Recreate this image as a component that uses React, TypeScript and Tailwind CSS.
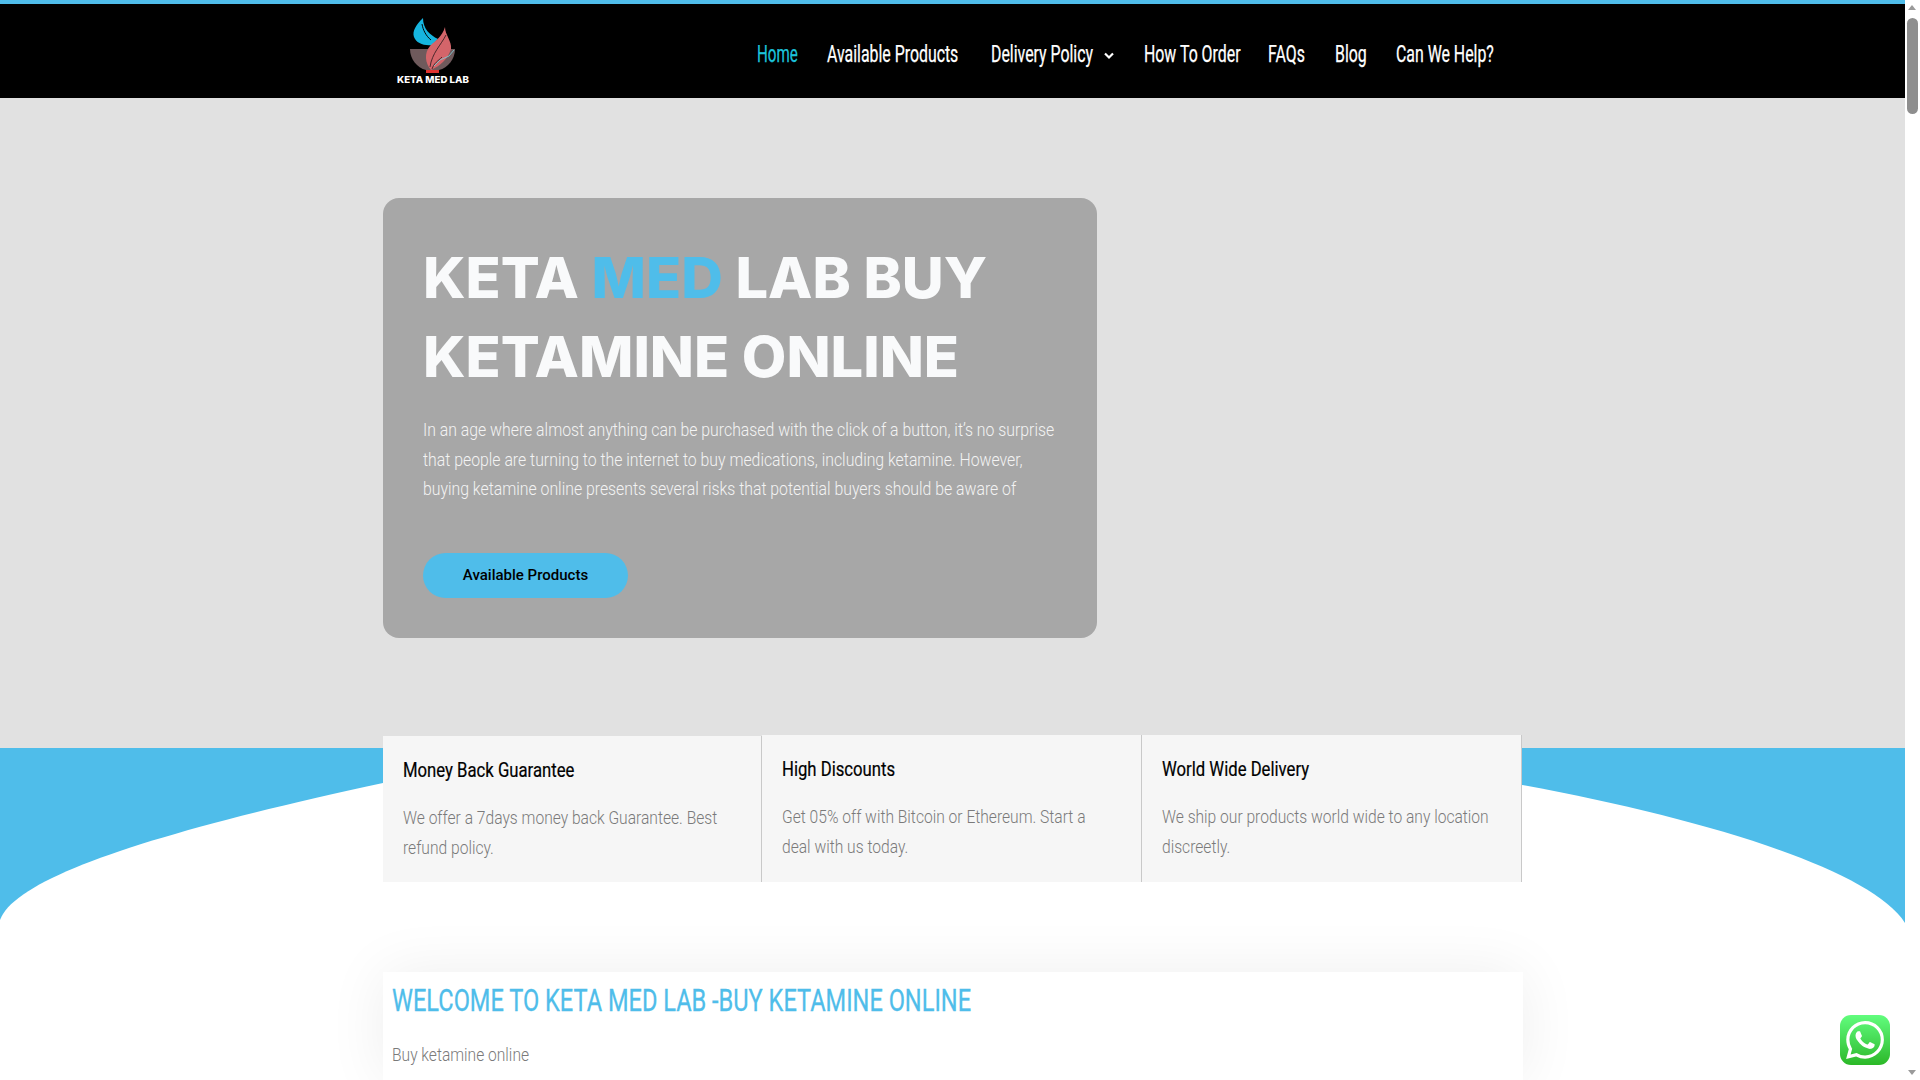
const navItems = ["Available Products", "Delivery Policy", "How To Order", "FAQs", "Blog", "Can We Help?"];
const navWidths = ["w-[134px]", "w-[123px]", "w-[94px]", "w-[37px]", "w-[31px]", "w-[98px]"];

function Logo() {
  return (
    <svg width="84" height="74" viewBox="0 0 84 74" className="block">
      <path d="M31 7 C24 14 20 20 22 26 C24 32 32 35 40 34 L46 28 C38 24 31 18 31 7Z" fill="#16b5df" />
      <path d="M30 13 C31 19 34 25 39 29" stroke="#000" strokeWidth="1" fill="none" />
      <path d="M18 38 H63 C63 48 56 57 47 59 H34 C25 57 18 48 18 38Z" fill="#6f5a5c" />
      <path d="M53 16 C53 24 60 30 59 38 C56 48 48 55 39 59 C33 52 32 42 38 35 C44 29 50 26 53 16Z" fill="#d4656a" />
      <path d="M54 24 C49 34 40 42 38 56 M50 46 C46 50 42 52 40 58" stroke="#3a2024" strokeWidth="0.9" fill="none" />
      <path d="M62 39 L57 45 L48 49 L42 55" stroke="#7fc6d0" strokeWidth="0.9" fill="none" />
      <rect x="34" y="59" width="13" height="3" fill="#e0332f" />
      <text x="5" y="72" textLength="72" lengthAdjust="spacingAndGlyphs" fill="#fff" fontSize="9.6" fontWeight="800" fontFamily="Inter, sans-serif">KETA MED LAB</text>
    </svg>
  );
}

function WhatsApp() {
  return (
    <div className="fixed top-[1015px] left-[1840px] flex h-[50px] w-[50px] items-center justify-center rounded-[11px] bg-gradient-to-b from-[#61fd7d] to-[#2bb826]">
      <svg width="38" height="38" viewBox="0 0 24 24" fill="#fff">
        <path d="M17.472 14.382c-.297-.149-1.758-.867-2.03-.967-.273-.099-.471-.148-.67.15-.197.297-.767.966-.94 1.164-.173.199-.347.223-.644.075-.297-.15-1.255-.463-2.39-1.475-.883-.788-1.48-1.761-1.653-2.059-.173-.297-.018-.458.13-.606.134-.133.298-.347.446-.52.149-.174.198-.298.298-.497.099-.198.05-.371-.025-.52-.075-.149-.669-1.612-.916-2.207-.242-.579-.487-.5-.669-.51-.173-.008-.371-.01-.57-.01-.198 0-.52.074-.792.372-.272.297-1.04 1.016-1.04 2.479 0 1.462 1.065 2.875 1.213 3.074.149.198 2.096 3.2 5.077 4.487.709.306 1.262.489 1.694.625.712.227 1.36.195 1.871.118.571-.085 1.758-.719 2.006-1.413.248-.694.248-1.289.173-1.413-.074-.124-.272-.198-.57-.347m-5.421 7.403h-.004a9.87 9.87 0 01-5.031-1.378l-.361-.214-3.741.982.998-3.648-.235-.374a9.86 9.86 0 01-1.51-5.26c.001-5.45 4.436-9.884 9.888-9.884 2.64 0 5.122 1.03 6.988 2.898a9.825 9.825 0 012.893 6.994c-.003 5.45-4.437 9.884-9.885 9.884m8.413-18.297A11.815 11.815 0 0012.05 0C5.495 0 .16 5.335.157 11.892c0 2.096.547 4.142 1.588 5.945L.057 24l6.305-1.654a11.882 11.882 0 005.683 1.448h.005c6.554 0 11.89-5.335 11.893-11.893a11.821 11.821 0 00-3.48-8.413z" />
      </svg>
    </div>
  );
}

function Feature({ title, text, className }: { title: string; text: string[]; className: string }) {
  return (
    <div className={`shrink-0 border-r border-[#c9c9c9] bg-[#f6f6f6] pl-5 ${className}`}>
      <h3 className="m-0 mt-[19px] h-[30px] origin-left scale-x-[0.835] text-[20px] leading-[30px] font-normal whitespace-nowrap text-black [-webkit-text-stroke:0.2px_black]">{title}</h3>
      <div className="mt-[18px] origin-left scale-x-[0.867] text-[18px] leading-[30px] font-light whitespace-nowrap text-[#7a7a7a]">
        {text.map((t) => <div key={t}>{t}</div>)}
      </div>
    </div>
  );
}

export default function App() {
  return (
    <div className="flex h-[1080px] w-[1920px] overflow-hidden bg-white font-['Roboto',sans-serif]">
      <div className="w-[1905px] shrink-0">
        <header className="flex h-[98px] border-t-[4px] border-[#4fbdea] bg-black pl-[392px]">
          <div className="mt-[7px] h-[74px] w-[365px] shrink-0"><Logo /></div>
          <nav className="mt-[31px] flex h-[40px] items-start gap-[30px] text-[23px] leading-[40px] whitespace-nowrap">
            <a className="inline-block w-[40px] origin-left scale-x-[0.66] text-[#1cc4dc] [-webkit-text-stroke:0.25px_#1cc4dc]">Home</a>
            {navItems.map((n, i) => (
              <a key={n} className={`${navWidths[i]} flex items-center justify-between text-white`}>
                <span className="inline-block w-0 shrink-0 origin-left scale-x-[0.69] [-webkit-text-stroke:0.25px_white]">{n}</span>
                {n === "Delivery Policy" && (
                  <svg className="mt-[2px] ml-auto shrink-0" width="10" height="8" viewBox="0 0 10 8" fill="none" stroke="#fff" strokeWidth="2.2"><path d="M1 1.5 L5 5.5 L9 1.5" /></svg>
                )}
              </a>
            ))}
          </nav>
        </header>

        <section className="h-[650px] bg-[#e1e1e1] pt-[100px] pl-[383px]">
          <div className="h-[440px] w-[714px] rounded-[16px] bg-[#a7a7a7] pt-[41px] pl-10">
            <h1 className="m-0 origin-left scale-x-[1.03] font-['Inter',sans-serif] text-[56px] leading-[79px] font-extrabold whitespace-nowrap text-[#f9fafb]">
              <div>KETA <span className="text-[#4fbdea]">MED</span> LAB BUY</div>
              <div>KETAMINE ONLINE</div>
            </h1>
            <div className="mt-[19px] origin-left scale-x-[0.855] text-[18.5px] leading-[29.5px] font-light whitespace-nowrap text-[#f3f3f3]">
              <div>In an age where almost anything can be purchased with the click of a button, it’s no surprise</div>
              <div>that people are turning to the internet to buy medications, including ketamine. However,</div>
              <div>buying ketamine online presents several risks that potential buyers should be aware of</div>
            </div>
            <a className="mt-[48px] flex h-[45px] w-[205px] items-center justify-center rounded-[23px] bg-[#4fbdea] text-[15px] font-medium text-black">Available Products</a>
          </div>
        </section>

        <section className="relative h-[332px]">
          <div className="absolute inset-x-0 top-0 h-[175px] overflow-hidden bg-[#4fbdea]">
            <svg className="absolute inset-0" width="1905" height="175" viewBox="0 0 1905 175">
              <path d="M0 172 C15 130 150 85 383 35 L1522 37 C1700 70 1870 120 1905 175 L0 175 Z" fill="#fff" />
            </svg>
          </div>
          <div className="absolute top-[-13px] left-[383px] flex">
            <Feature className="mt-px h-[146px] w-[379px]" title="Money Back Guarantee" text={["We offer a 7days money back Guarantee. Best", "refund policy."]} />
            <Feature className="h-[147px] w-[380px]" title="High Discounts" text={["Get 05% off with Bitcoin or Ethereum. Start a", "deal with us today."]} />
            <Feature className="h-[147px] w-[380px]" title="World Wide Delivery" text={["We ship our products world wide to any location", "discreetly."]} />
          </div>
          <div className="absolute top-[224px] left-[383px] h-[108px] w-[1140px] bg-white pl-[9px] shadow-[0_0_60px_rgba(0,0,0,0.07)]">
            <h2 className="m-0 mt-[10px] origin-left scale-x-[0.737] text-[32px] leading-[36px] font-normal whitespace-nowrap text-[#4fbdea] [-webkit-text-stroke:0.3px_#4fbdea]">WELCOME TO KETA MED LAB -BUY KETAMINE ONLINE</h2>
            <p className="m-0 mt-[22px] origin-left scale-x-[0.843] text-[18.5px] leading-[30px] font-light whitespace-nowrap text-[#7a7a7a]">Buy ketamine online</p>
          </div>
        </section>
      </div>
      <div className="relative h-[1080px] w-[15px] bg-white">
        <div className="absolute top-[18px] left-[2px] h-[96px] w-[11px] rounded-[6px] bg-[#8e8e8e]" />
        <div className="absolute top-[5px] left-[3px] h-0 w-0 border-x-[4px] border-b-[5px] border-x-transparent border-b-[#9a9a9a]" />
        <div className="absolute bottom-[5px] left-[3px] h-0 w-0 border-x-[4px] border-t-[5px] border-x-transparent border-t-[#9a9a9a]" />
      </div>
      <WhatsApp />
    </div>
  );
}
